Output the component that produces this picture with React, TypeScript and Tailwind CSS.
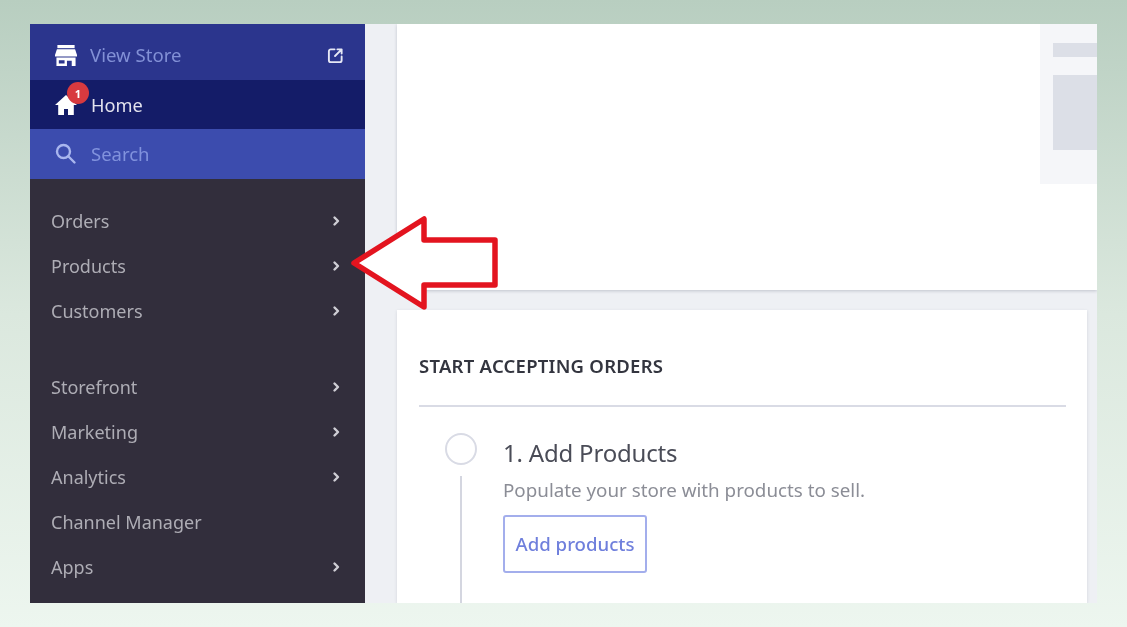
import React from "react";

const font = { fontFamily: '"Noto Sans", "Open Sans", sans-serif' };

function Chevron() {
  return (
    <svg width="10" height="12" viewBox="0 0 10 12" fill="none" stroke="#cfced5" strokeWidth="2.4" strokeLinecap="round" strokeLinejoin="round">
      <path d="M3.500 2.500l3.500 3.500-3.500 3.500" />
    </svg>
  );
}

function NavItem({ label, arrow = true }: { label: string; arrow?: boolean }) {
  return (
    <div className="h-[45px] flex items-center justify-between pl-[21px] pr-[24px]">
      <span className="text-[18px] leading-none text-[#aeadb5]">{label}</span>
      {arrow && <Chevron />}
    </div>
  );
}

export default function App() {
  return (
    <div
      className="w-[1127px] h-[627px] overflow-hidden pl-[30px] pt-[24px] bg-gradient-to-b from-[#b8cec0] via-[#dbe8de] to-[#edf6ef]"
      style={font}
    >
      <div className="relative w-[1067px] h-[579px] flex overflow-hidden bg-[#eef0f4] blur-[0.7px]">
        {/* Sidebar */}
        <aside className="w-[335px] shrink-0 bg-[#322e3c] flex flex-col">
          <div className="h-[56px] bg-[#2b358d] flex items-center justify-between pt-[6px] pl-[25px] pr-[21px]">
            <div className="flex items-center gap-[13px]">
              <svg width="22" height="21" viewBox="0 0 23 20" fill="#ffffff" preserveAspectRatio="none">
                <path d="M2.500 0h18v3h-18z" />
                <path d="M2 4h19l2 5.500v1.500H0V9.500z" />
                <path d="M1.500 12h20v8h-4v-5h-5v5h-11zM4 14.500v3h6v-3z" fillRule="evenodd" />
              </svg>
              <span className="text-[18.600px] leading-none text-[#8290d6]">View Store</span>
            </div>
            <svg width="17" height="17" viewBox="0 0 18 18" fill="none" stroke="#e6e8f5" strokeWidth="2" strokeLinecap="round" strokeLinejoin="round">
              <path d="M8 2.500H4a2 2 0 0 0-2 2v9.500a2 2 0 0 0 2 2h9.500a2 2 0 0 0 2-2v-4" />
              <path d="M8.500 9.500L15 3M11 2.500h4.500V7" />
            </svg>
          </div>
          <div className="h-[49px] bg-[#141c68] flex items-center pl-[25px] gap-[14px]">
            <div className="relative w-[22px] h-[20px] mt-[1px]">
              <svg width="22" height="20" viewBox="0 0 22 20" fill="#ffffff">
                <path d="M11 0L0 10h3.200v10h5.800v-6h4v6h5.800V10H22z" />
              </svg>
              <span className="absolute -top-[13px] left-[12px] w-[22px] h-[22px] rounded-full bg-[#d83a3f] text-white text-[11px] font-bold flex items-center justify-center leading-none">
                1
              </span>
            </div>
            <span className="text-[18.200px] leading-none text-[#e3e3ee] pt-[1px]">Home</span>
          </div>
          <div className="h-[50px] bg-[#3c4cae] flex items-center pl-[25px] gap-[14px]">
            <svg width="22" height="22" viewBox="0 0 22 22" fill="none" stroke="#a9b6ee" strokeWidth="2.400" strokeLinecap="round">
              <circle cx="8.500" cy="8.500" r="6.500" />
              <path d="M13.500 13.500l6 6" />
            </svg>
            <span className="text-[18.500px] leading-none text-[#8192dd]">Search</span>
          </div>
          <div className="pt-[19px]">
            <NavItem label="Orders" />
            <NavItem label="Products" />
            <NavItem label="Customers" />
            <div className="h-[31px]" />
            <NavItem label="Storefront" />
            <NavItem label="Marketing" />
            <NavItem label="Analytics" />
            <NavItem label="Channel Manager" arrow={false} />
            <NavItem label="Apps" />
          </div>
        </aside>

        {/* Main */}
        <main className="flex-1 min-w-0 pl-[32px] flex flex-col">
          <div className="h-[266px] shrink-0 bg-white flex justify-end shadow-[0_1px_3px_rgba(60,64,90,0.25)]">
            <div className="w-[57px] h-[160px] bg-[#f5f6f9] pl-[13px] pt-[19px]">
              <div className="h-[14px] bg-[#dcdfe7]" />
              <div className="h-[75px] mt-[18px] bg-[#dcdfe7]" />
            </div>
          </div>
          <section className="mt-[20px] mr-[10px] flex-1 bg-white pl-[22px] pr-[21px] pt-[44px] shadow-[0_1px_3px_rgba(60,64,90,0.15)] overflow-hidden">
            <h2 className="text-[18.500px] leading-[24px] font-semibold text-[#33353f] tracking-[0.25px]">START ACCEPTING ORDERS</h2>
            <div className="mt-[27px] h-[2px] bg-[#d9dbe5]" />
            <div className="flex pl-[26px] pt-[26px]">
              <div className="w-[32px] shrink-0 flex flex-col items-start">
                <div className="w-[32px] h-[32px] rounded-full border-2 border-[#d9dbe5]" />
                <div className="ml-[15px] mt-[11px] w-[2px] h-[140px] bg-[#d4d6e0]" />
              </div>
              <div className="ml-[26px] pt-[3px]">
                <div className="text-[24px] leading-[34px] text-[#4a4c57] tracking-[-0.2px]">1. Add Products</div>
                <div className="mt-[8px] text-[18.800px] leading-[24px] text-[#8b8d96]">Populate your store with products to sell.</div>
                <button className="mt-[13px] block w-[144px] h-[58px] rounded-[3px] border-2 border-[#a3aeec] bg-white text-[18.600px] font-medium text-[#6f7fdc]">
                  Add products
                </button>
              </div>
            </div>
          </section>
        </main>

        {/* Annotation arrow */}
        <svg className="absolute left-[318px] top-[190px]" width="155" height="100" viewBox="0 0 155 100" fill="#ffffff" stroke="#e3141f" strokeWidth="5.500" strokeLinejoin="round">
          <path d="M6 49L76 5V26H147V71H76V93Z" />
        </svg>
      </div>
    </div>
  );
}
